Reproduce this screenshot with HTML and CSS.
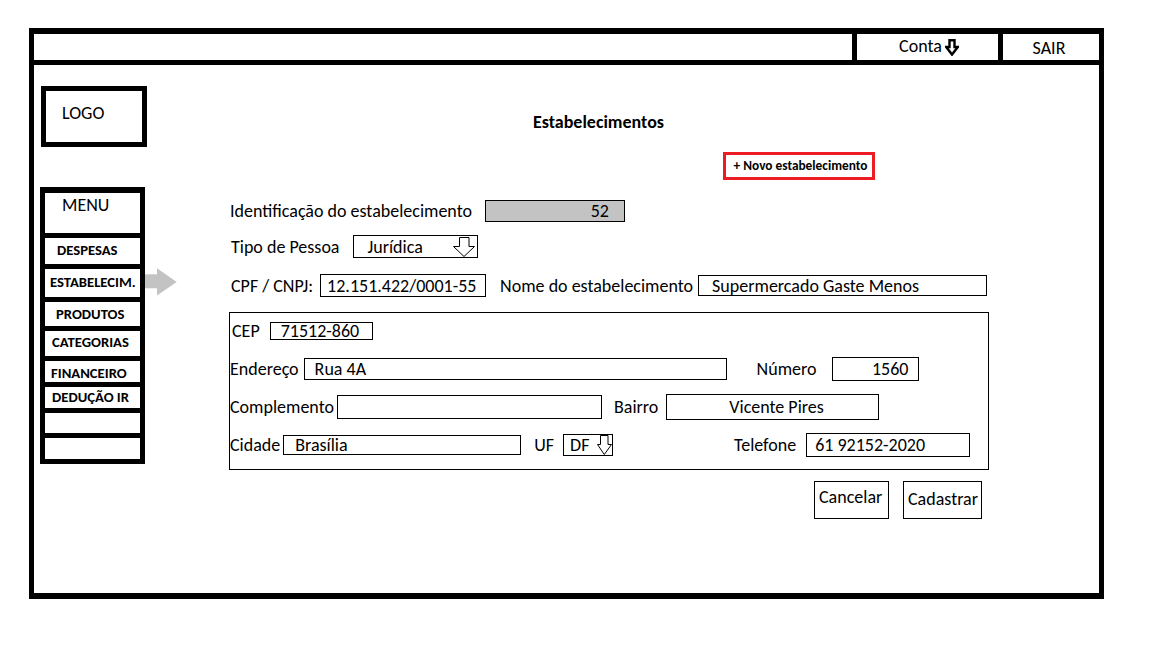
FILE: index.html
```html
<!DOCTYPE html>
<html lang="pt-BR">
<head>
<meta charset="utf-8">
<title>Estabelecimentos</title>
<link rel="stylesheet" href="styles.css">
</head>
<body>
<div class="frame">
  <header class="topbar">
    <div class="tb-blank"></div>
    <div class="tb-cell tb-conta">
      <span class="tb-text">Conta</span>
      <svg class="conta-arrow" width="14" height="17" viewBox="0 0 14 17"><polygon points="4.5,1.2 9.5,1.2 9.5,8 12.8,8 7,15.6 1.2,8 4.5,8" fill="#fff" stroke="#000" stroke-width="2.4"/></svg>
    </div>
    <div class="tb-cell tb-sair"><span class="tb-text">SAIR</span></div>
  </header>

  <div class="body">
    <aside class="sidebar">
      <div class="logo">LOGO</div>
      <nav class="menu">
        <div class="menu-head">MENU</div>
        <div class="menu-item">DESPESAS</div>
        <div class="menu-item">ESTABELECIM.
          <svg class="active-arrow" width="32" height="28" viewBox="0 0 32 28"><rect x="0" y="6.3" width="12.5" height="14" fill="#c3c3c3"/><polygon points="12,0.3 31.7,14 12,27.6" fill="#c3c3c3"/></svg>
        </div>
        <div class="menu-item">PRODUTOS</div>
        <div class="menu-item">CATEGORIAS</div>
        <div class="menu-item">FINANCEIRO</div>
        <div class="menu-item">DEDUÇÃO IR</div>
        <div class="menu-item"></div>
        <div class="menu-item"></div>
      </nav>
    </aside>

    <main class="main">
      <h1 class="page-title">Estabelecimentos</h1>
      <div class="new-row">
        <button class="new-btn">+ Novo estabelecimento</button>
      </div>

      <div class="form-row r1">
        <span class="label">Identificação do estabelecimento</span>
        <div class="field f-id">52</div>
      </div>
      <div class="form-row r2">
        <span class="label">Tipo de Pessoa</span>
        <div class="field f-tipo">
          <span>Jurídica</span>
          <svg width="22" height="20" viewBox="0 0 22 20"><polygon points="6.5,0.5 16,0.5 16,9.5 21.5,9.5 11,19.5 0.5,9.5 6.5,9.5" fill="#fff" stroke="#000" stroke-width="1"/></svg>
        </div>
      </div>
      <div class="form-row r3">
        <span class="label">CPF / CNPJ:</span>
        <div class="field f-doc">12.151.422/0001-55</div>
        <span class="label l-nome">Nome do estabelecimento</span>
        <div class="field f-nome">Supermercado Gaste Menos</div>
      </div>

      <fieldset class="address">
        <div class="addr-row">
          <span class="label l-cep">CEP</span>
          <div class="field f-cep">71512-860</div>
        </div>
        <div class="addr-row">
          <span class="label">Endereço</span>
          <div class="field f-end">Rua 4A</div>
          <span class="label l-num">Número</span>
          <div class="field f-num">1560</div>
        </div>
        <div class="addr-row">
          <span class="label l-left">Complemento</span>
          <div class="field f-comp"></div>
          <span class="label l-bairro">Bairro</span>
          <div class="field f-bairro">Vicente Pires</div>
        </div>
        <div class="addr-row">
          <span class="label l-left">Cidade</span>
          <div class="field f-cid">Brasília</div>
          <span class="label l-uf">UF</span>
          <div class="field f-uf">
            <span>DF</span>
            <svg width="15" height="20" viewBox="0 0 15 20"><polygon points="3.5,0.5 11,0.5 11,9.5 14.5,9.5 7.3,19.5 0.5,9.5 3.5,9.5" fill="#fff" stroke="#000" stroke-width="1"/></svg>
          </div>
          <span class="label l-tel">Telefone</span>
          <div class="field f-tel">61 92152-2020</div>
        </div>
      </fieldset>

      <div class="actions">
        <button class="btn btn-cancel">Cancelar</button>
        <button class="btn btn-save">Cadastrar</button>
      </div>
    </main>
  </div>
</div>
</body>
</html>
```
FILE: styles.css
```css
* { box-sizing: border-box; }

body {
  margin: 0;
  background: #fff;
  color: #000;
  font-family: "Calibri", "Carlito", "Lato", sans-serif;
  font-size: 18px;
  line-height: 18px;
}

.frame {
  margin: 28px 0 0 29px;
  width: 1075px;
  height: 571px;
  border: solid #000;
  border-width: 6px 5px 6px 5px;
  display: flex;
  flex-direction: column;
}

/* top bar */
.topbar {
  display: flex;
  height: 31px;
  border-bottom: 5px solid #000;
  flex-shrink: 0;
}
.tb-blank { flex: 1; }
.tb-cell {
  border-left: 5px solid #000;
  display: flex;
  justify-content: center;
  align-items: flex-start;
}
.tb-conta { width: 146px; padding-top: 3px; padding-left: 3px; }
.tb-sair { width: 101px; padding-top: 5px; padding-right: 4px; }
.conta-arrow { margin: 2px 0 0 3px; }

/* body */
.body {
  flex: 1;
  display: flex;
}

.sidebar {
  width: 196px;
  flex-shrink: 0;
  padding-left: 7px;
  display: flex;
  flex-direction: column;
  align-items: flex-start;
}
.logo {
  margin-top: 21px;
  width: 106px;
  height: 61px;
  border: 5px solid #000;
  padding: 13px 0 0 16px;
}
.menu {
  margin-top: 40px;
  margin-left: -1px;
  width: 105px;
  border: 5px solid #000;
  border-top-width: 6px;
}
.menu-head {
  height: 40px;
  padding: 3px 0 0 17px;
}
.menu-item {
  position: relative;
  border-top: 5px solid #000;
  display: flex;
  align-items: center;
  font-weight: bold;
  font-size: 14.67px;
  line-height: 15px;
  white-space: nowrap;
}
.menu-item:nth-child(2) { height: 31px; padding-left: 12px; padding-bottom: 2px; }
.menu-item:nth-child(3) { height: 33px; padding-left: 5px; padding-bottom: 2px; }
.menu-item:nth-child(4) { height: 29px; padding-left: 11px; }
.menu-item:nth-child(5) { height: 30px; padding-left: 7px; padding-bottom: 3px; }
.menu-item:nth-child(6) { height: 26px; padding-left: 6px; padding-top: 3px; }
.menu-item:nth-child(7) { height: 26px; padding-left: 7px; }
.menu-item:nth-child(8) { height: 25px; }
.menu-item:nth-child(9) { height: 26px; }
.active-arrow {
  position: absolute;
  left: 100px;
  top: -1px;
}

/* main */
.main {
  flex: 1;
  display: flex;
  flex-direction: column;
  align-items: flex-start;
}
.page-title {
  margin: 48px 0 0 0;
  padding-left: 303px;
  font-size: 18px;
  line-height: 18px;
  height: 18px;
  font-weight: bold;
}
.new-row {
  margin-top: 21px;
  padding-left: 493px;
  display: flex;
}
.new-btn {
  width: 152px;
  height: 28px;
  border: 3px solid #ed1c24;
  background: #fff;
  padding: 0 0 0 3px;
  font-family: inherit;
  font-weight: bold;
  font-size: 13.33px;
  line-height: 14px;
  color: #000;
  white-space: nowrap;
}

.form-row {
  display: flex;
  align-items: center;
  white-space: nowrap;
}
.r1 { margin-top: 20px; height: 22px; }
.r2 { margin-top: 13px; height: 23px; padding-left: 1px; }
.r3 { margin-top: 16px; height: 23px; padding-left: 1px; }

.label { white-space: nowrap; }

.field {
  border: 1px solid #000;
  display: flex;
  align-items: center;
  white-space: nowrap;
  background: #fff;
}
.f-id { margin-left: 13px; width: 140px; height: 22px; background: #c3c3c3; justify-content: flex-end; padding-right: 15px; }
.f-tipo { margin-left: 13px; width: 125px; height: 23px; padding: 0 2px 0 14px; justify-content: space-between; }
.f-doc { margin-left: 7px; width: 166px; height: 23px; padding-left: 6px; }
.l-nome { margin-left: 14px; }
.f-nome { margin-left: 5px; width: 289px; height: 21px; padding-left: 13px; }

.address {
  margin: 15px 0 0 -1px;
  width: 760px;
  height: 158px;
  border: 1px solid #000;
  padding: 5px 0 0 0;
  min-width: 0;
  display: flex;
  flex-direction: column;
  gap: 12px;
}
.addr-row {
  display: flex;
  align-items: center;
  height: 26px;
  white-space: nowrap;
}
.l-cep { margin-left: 2px; }
.l-left { margin-left: 0; }
.f-cep { margin-left: 10px; width: 103px; height: 18px; padding-left: 10px; }
.f-end { margin-left: 5px; width: 423px; height: 22px; padding-left: 10px; }
.l-num { margin-left: 30px; }
.f-num { margin-left: 15px; width: 87px; height: 24px; justify-content: flex-end; padding-right: 9px; }
.f-comp { margin-left: 3px; width: 265px; height: 24px; }
.l-bairro { margin-left: 12px; }
.f-bairro { margin-left: 8px; width: 213px; height: 26px; padding-left: 62px; }
.f-cid { margin-left: 3px; width: 238px; height: 20px; padding-left: 11px; }
.l-uf { margin-left: 13px; }
.f-uf { margin-left: 9px; width: 50px; height: 22px; padding-left: 6px; justify-content: space-between; }
.l-tel { margin-left: 121px; }
.f-tel { margin-left: 10px; width: 164px; height: 24px; padding-left: 8px; }

.actions {
  margin: 11px 0 0 584px;
  display: flex;
  gap: 14px;
}
.btn {
  height: 38px;
  border: 1px solid #000;
  background: #fff;
  font-family: inherit;
  font-size: 18px;
  line-height: 18px;
  color: #000;
  text-align: left;
  padding: 0 0 0 4px;
  display: flex;
  align-items: flex-start;
}
.btn-cancel { width: 75px; padding-top: 6px; }
.btn-save { width: 79px; padding-top: 8px; }
```
